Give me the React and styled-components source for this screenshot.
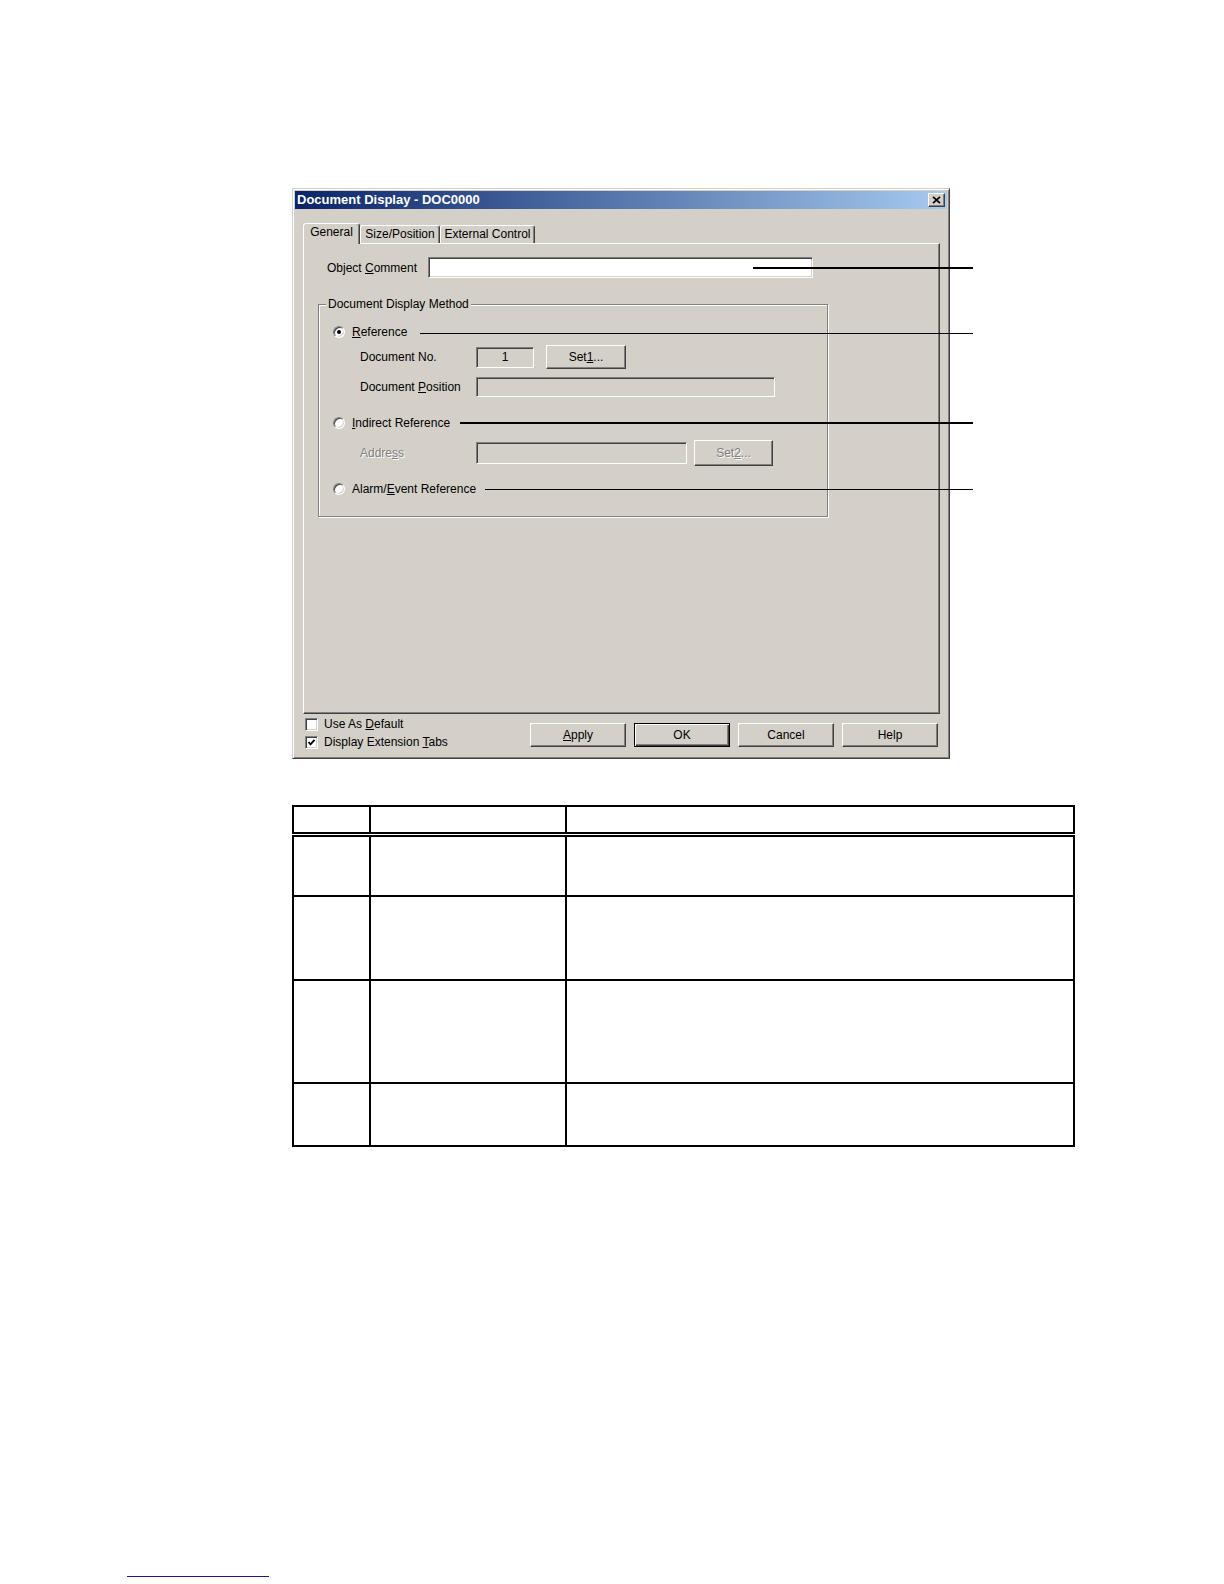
import React from "react";
import styled, { createGlobalStyle } from "styled-components";

const GlobalStyle = createGlobalStyle`
  html, body {
    margin: 0;
    padding: 0;
    background: #ffffff;
  }
  body {
    font-family: "Liberation Sans", Arial, sans-serif;
    font-size: 12px;
    color: #000000;
  }
`;

const FACE = "#d4d0c8";

const Page = styled.div`
  width: 1224px;
  min-height: 1584px;
  box-sizing: border-box;
  padding-top: 188px;
  display: flex;
  flex-direction: column;
`;

const Figure = styled.div`
  position: relative;
  margin-left: 292px;
  width: 658px;
`;

const Dialog = styled.div`
  box-sizing: border-box;
  width: 658px;
  height: 571px;
  padding: 2px;
  background: ${FACE};
  border: 1px solid;
  border-color: ${FACE} #404040 #404040 ${FACE};
  box-shadow: inset 1px 1px #ffffff, inset -1px -1px #808080;
  display: flex;
  flex-direction: column;
  font-family: "Liberation Sans", Arial, sans-serif;
  font-size: 12px;
  line-height: 14px;
`;

const TitleBar = styled.div`
  height: 18px;
  display: flex;
  align-items: center;
  padding: 0 2px;
  background: linear-gradient(to right, #0a246a, #a6caf0);
  color: #ffffff;
  font-weight: bold;
  font-size: 13px;
`;

const CloseButton = styled.div`
  margin-left: auto;
  box-sizing: border-box;
  width: 17px;
  height: 14px;
  background: ${FACE};
  border: 1px solid;
  border-color: #ffffff #404040 #404040 #ffffff;
  box-shadow: inset -1px -1px #808080;
  display: flex;
  align-items: center;
  justify-content: center;
`;

const TabStrip = styled.div`
  display: flex;
  align-items: flex-end;
  height: 20px;
  margin: 14px 0 0 8px;
  position: relative;
  z-index: 1;
`;

const Tab = styled.div`
  box-sizing: border-box;
  width: ${(p) => p.$w}px;
  height: ${(p) => (p.$active ? 21 : 18)}px;
  margin-bottom: ${(p) => (p.$active ? -1 : 0)}px;
  padding-bottom: ${(p) => (p.$active ? 4 : 1)}px;
  background: ${FACE};
  border: 1px solid;
  border-bottom: none;
  border-color: #ffffff #404040 transparent #ffffff;
  border-radius: 3px 3px 0 0;
  box-shadow: inset -1px 0 #808080;
  display: flex;
  align-items: center;
  justify-content: center;
  white-space: nowrap;
`;

const Panel = styled.div`
  box-sizing: border-box;
  width: 637px;
  height: 471px;
  margin-left: 8px;
  padding: 13px 0 0 14px;
  border: 1px solid;
  border-color: #ffffff #404040 #404040 #ffffff;
  box-shadow: inset -1px -1px #808080;
`;

const CommentRow = styled.div`
  display: flex;
  align-items: center;
  height: 21px;
  margin-left: 9px;
`;

const CommentLabel = styled.span`
  width: 101px;
`;

const Field = styled.div`
  box-sizing: border-box;
  width: ${(p) => p.$w}px;
  height: ${(p) => p.$h}px;
  background: ${(p) => (p.$white ? "#ffffff" : FACE)};
  border: 1px solid;
  border-color: #808080 #ffffff #ffffff #808080;
  box-shadow: inset 1px 1px #404040, inset -1px -1px ${FACE};
  display: flex;
  align-items: center;
  justify-content: center;
`;

const GroupBox = styled.fieldset`
  box-sizing: border-box;
  width: 510px;
  margin: 19px 0 0 0;
  padding: 0 0 17px 0;
  border: 1px solid #808080;
  box-shadow: inset 1px 1px #ffffff, 1px 1px #ffffff;
  min-width: 0;
`;

const Legend = styled.legend`
  margin-left: 7px;
  padding: 0 2px;
  line-height: 14px;
  background: ${FACE};
`;

const GroupBody = styled.div`
  padding-left: 14px;
`;

const Row = styled.div`
  display: flex;
  align-items: center;
  height: ${(p) => p.$h}px;
  margin-top: ${(p) => p.$top}px;
  padding-left: ${(p) => (p.$indent ? 27 : 0)}px;
`;

const Radio = styled.span`
  box-sizing: border-box;
  width: 12px;
  height: 12px;
  border-radius: 50%;
  background: #ffffff;
  border: 1px solid;
  border-color: #808080 #ffffff #ffffff #808080;
  box-shadow: inset 1px 1px #404040, inset -1px -1px ${FACE};
  display: flex;
  align-items: center;
  justify-content: center;
  &::after {
    content: "";
    width: 4px;
    height: 4px;
    border-radius: 50%;
    background: ${(p) => (p.$checked ? "#000000" : "transparent")};
  }
`;

const RadioLabel = styled.span`
  margin-left: 7px;
`;

const FieldLabel = styled.span`
  width: 116px;
  color: ${(p) => (p.$disabled ? "#808080" : "#000000")};
  text-shadow: ${(p) => (p.$disabled ? "1px 1px 0 #ffffff" : "none")};
`;

const Button = styled.div`
  box-sizing: border-box;
  width: ${(p) => p.$w}px;
  height: ${(p) => p.$h}px;
  margin-left: ${(p) => p.$gap || 0}px;
  background: ${FACE};
  border: 1px solid;
  border-color: ${(p) =>
    p.$default ? "#000000" : "#ffffff #404040 #404040 #ffffff"};
  box-shadow: ${(p) =>
    p.$default
      ? "inset 1px 1px #ffffff, inset -1px -1px #404040, inset -2px -2px #808080"
      : "inset -1px -1px #808080"};
  color: ${(p) => (p.$disabled ? "#808080" : "#000000")};
  text-shadow: ${(p) => (p.$disabled ? "1px 1px 0 #ffffff" : "none")};
  display: flex;
  align-items: center;
  justify-content: center;
`;

const Footer = styled.div`
  display: flex;
  align-items: flex-start;
  padding-left: 10px;
`;

const CheckColumn = styled.div`
  display: flex;
  flex-direction: column;
  margin-top: 1px;
`;

const CheckRow = styled.div`
  display: flex;
  align-items: center;
  height: 18px;
  gap: 6px;
`;

const CheckBox = styled.span`
  box-sizing: border-box;
  width: 13px;
  height: 13px;
  background: #ffffff;
  border: 1px solid;
  border-color: #808080 #ffffff #ffffff #808080;
  box-shadow: inset 1px 1px #404040, inset -1px -1px ${FACE};
  display: flex;
  align-items: center;
  justify-content: center;
`;

const ButtonGroup = styled.div`
  display: flex;
  gap: 8px;
  margin-left: auto;
  margin-right: 9px;
  padding-top: 9px;
`;

const Callout = styled.div`
  position: absolute;
  left: ${(p) => p.$left}px;
  top: ${(p) => p.$top}px;
  width: ${(p) => p.$w}px;
  height: ${(p) => (p.$thick ? 2 : 1)}px;
  background: #000000;
`;

const NoteTable = styled.table`
  margin: 46px 0 0 292px;
  width: 781px;
  border-collapse: collapse;
  table-layout: fixed;

  th,
  td {
    border: 2px solid #000000;
    padding: 0;
  }

  thead th {
    border-bottom: 5px double #000000;
  }
`;

const FooterLink = styled.div`
  width: 142px;
  margin: 429px 0 0 127px;
  border-top: 1px solid #1a1a8a;
`;

function CloseGlyph() {
  return (
    <svg width="9" height="8" viewBox="0 0 9 8">
      <path d="M1 0.8 L8 7.2 M8 0.8 L1 7.2" stroke="#000" strokeWidth="1.7" />
    </svg>
  );
}

function CheckGlyph() {
  return (
    <svg width="9" height="9" viewBox="0 0 9 9">
      <polyline
        points="1.5,4 3.5,6.3 7.5,1.8"
        fill="none"
        stroke="#000"
        strokeWidth="1.8"
      />
    </svg>
  );
}

const callouts = [
  { left: 461, top: 79, w: 220, thick: true },
  { left: 128, top: 145, w: 553, thick: false },
  { left: 168, top: 234, w: 513, thick: true },
  { left: 193, top: 301, w: 488, thick: false },
];

const rowHeights = [62, 84, 103, 63];

function App() {
  return (
    <>
      <GlobalStyle />
      <Page>
        <Figure>
          <Dialog>
            <TitleBar>
              Document Display - DOC0000
              <CloseButton>
                <CloseGlyph />
              </CloseButton>
            </TitleBar>

            <TabStrip>
              <Tab $w={57} $active>
                General
              </Tab>
              <Tab $w={80}>Size/Position</Tab>
              <Tab $w={95}>External Control</Tab>
            </TabStrip>

            <Panel>
              <CommentRow>
                <CommentLabel>
                  Object <u>C</u>omment
                </CommentLabel>
                <Field $w={385} $h={21} $white />
              </CommentRow>

              <GroupBox>
                <Legend>Document Display Method</Legend>
                <GroupBody>
                  <Row $h={20} $top={11}>
                    <Radio $checked />
                    <RadioLabel>
                      <u>R</u>eference
                    </RadioLabel>
                  </Row>
                  <Row $h={24} $top={3} $indent>
                    <FieldLabel>Document No.</FieldLabel>
                    <Field $w={58} $h={21}>
                      1
                    </Field>
                    <Button $w={80} $h={24} $gap={12}>
                      <span>
                        Set<u>1</u>...
                      </span>
                    </Button>
                  </Row>
                  <Row $h={20} $top={8} $indent>
                    <FieldLabel>
                      Document <u>P</u>osition
                    </FieldLabel>
                    <Field $w={299} $h={20} />
                  </Row>
                  <Row $h={20} $top={16}>
                    <Radio />
                    <RadioLabel>
                      <u>I</u>ndirect Reference
                    </RadioLabel>
                  </Row>
                  <Row $h={26} $top={7} $indent>
                    <FieldLabel $disabled>
                      Addre<u>s</u>s
                    </FieldLabel>
                    <Field $w={211} $h={22} />
                    <Button $w={79} $h={26} $gap={7} $disabled>
                      <span>
                        Set<u>2</u>...
                      </span>
                    </Button>
                  </Row>
                  <Row $h={20} $top={13}>
                    <Radio />
                    <RadioLabel>
                      Alarm/<u>E</u>vent Reference
                    </RadioLabel>
                  </Row>
                </GroupBody>
              </GroupBox>
            </Panel>

            <Footer>
              <CheckColumn>
                <CheckRow>
                  <CheckBox />
                  <span>
                    Use As <u>D</u>efault
                  </span>
                </CheckRow>
                <CheckRow>
                  <CheckBox>
                    <CheckGlyph />
                  </CheckBox>
                  <span>
                    Display Extension <u>T</u>abs
                  </span>
                </CheckRow>
              </CheckColumn>
              <ButtonGroup>
                <Button $w={96} $h={24}>
                  <span>
                    <u>A</u>pply
                  </span>
                </Button>
                <Button $w={96} $h={24} $default>
                  OK
                </Button>
                <Button $w={96} $h={24}>
                  Cancel
                </Button>
                <Button $w={96} $h={24}>
                  Help
                </Button>
              </ButtonGroup>
            </Footer>
          </Dialog>

          {callouts.map((c, i) => (
            <Callout key={i} $left={c.left} $top={c.top} $w={c.w} $thick={c.thick} />
          ))}
        </Figure>

        <NoteTable>
          <colgroup>
            <col style={{ width: 77 }} />
            <col style={{ width: 196 }} />
            <col style={{ width: 508 }} />
          </colgroup>
          <thead>
            <tr style={{ height: 28 }}>
              <th />
              <th />
              <th />
            </tr>
          </thead>
          <tbody>
            {rowHeights.map((h, i) => (
              <tr key={i} style={{ height: h }}>
                <td />
                <td />
                <td />
              </tr>
            ))}
          </tbody>
        </NoteTable>

        <FooterLink />
      </Page>
    </>
  );
}

export default App;
